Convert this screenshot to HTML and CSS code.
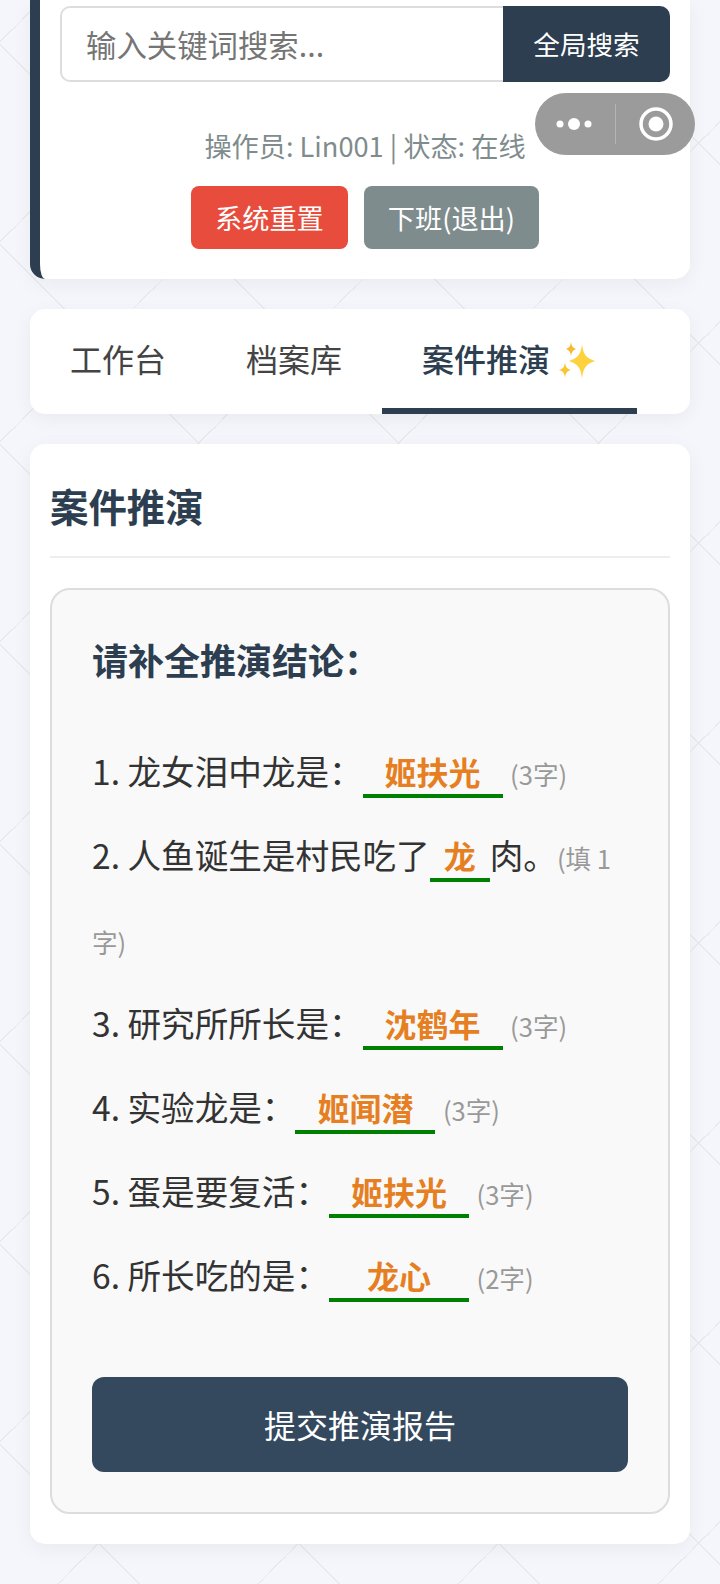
FILE: index.html
```html
<!DOCTYPE html>
<html lang="zh-CN">
<head>
  <meta charset="UTF-8" />
  <meta name="viewport" content="width=device-width, initial-scale=1.0" />
  <title>案件推演</title>
  <link rel="stylesheet" href="styles.css">
</head>
<body>
  <div class="page">
    <div class="card header-card">
      <div class="search-row">
        <div class="search-input">输入关键词搜索...</div>
        <div class="search-btn">全局搜索</div>
      </div>
      <div class="status">操作员: Lin001 | 状态: 在线</div>
      <div class="actions">
        <div class="btn btn-red">系统重置</div>
        <div class="btn btn-gray">下班(退出)</div>
      </div>
    </div>

    <div class="card tabs">
      <div class="tab">工作台</div>
      <div class="tab">档案库</div>
      <div class="tab tab-active">案件推演
        <svg class="sparkle" width="40" height="44" viewBox="0 0 40 44">
          <path d="M25 4C26 14 29 18 38 21C29 24 26 28 25 39C24 28 21 24 12 21C21 18 24 14 25 4Z" fill="#fdd23c" />
          <path d="M14 2C14.500 6 16 8 19 9C16 10 14.500 12 14 16C13.500 12 12 10 9 9C12 8 13.500 6 14 2Z" fill="#f5b932" />
          <path d="M8 22C8.500 27 10 29 14 30C10 31 8.500 33 8 38C7.500 33 6 31 2 30C6 29 7.500 27 8 22Z" fill="#fbc531" />
        </svg>
      </div>
    </div>

    <div class="card main-card">
      <h2 class="title">案件推演</h2>
      <div class="quiz">
        <h3 class="quiz-title">请补全推演结论：</h3>
        <div class="quiz-row">1. 龙女泪中龙是：<span class="blank">姬扶光</span> <span class="hint">(3字)</span></div>
        <div class="quiz-row">2. 人鱼诞生是村民吃了<span class="blank blank-short">龙</span>肉。<span class="hint">(填 1 字)</span></div>
        <div class="quiz-row">3. 研究所所长是：<span class="blank">沈鹤年</span> <span class="hint">(3字)</span></div>
        <div class="quiz-row">4. 实验龙是：<span class="blank">姬闻潜</span> <span class="hint">(3字)</span></div>
        <div class="quiz-row">5. 蛋是要复活：<span class="blank">姬扶光</span> <span class="hint">(3字)</span></div>
        <div class="quiz-row">6. 所长吃的是：<span class="blank">龙心</span> <span class="hint">(2字)</span></div>
        <div class="submit">提交推演报告</div>
      </div>
    </div>
  </div>

  <div class="capsule">
    <svg width="54" height="16" viewBox="0 0 54 16">
      <circle cx="13" cy="8" r="3.500" fill="#fff" />
      <circle cx="27" cy="8" r="6" fill="#fff" />
      <circle cx="41" cy="8" r="3.500" fill="#fff" />
    </svg>
    <span class="capsule-line"></span>
    <svg width="36" height="36" viewBox="0 0 36 36">
      <circle cx="18" cy="18" r="15" fill="none" stroke="#fff" stroke-width="3.500" />
      <circle cx="18" cy="18" r="7.500" fill="#fff" />
    </svg>
  </div>
</body>
</html>
```

FILE: styles.css
```css
* { box-sizing: border-box; margin: 0; padding: 0; }
html, body { width: 720px; height: 1584px; overflow: hidden; }
body {
  position: relative;
  font-family: "Noto Sans CJK SC", "Noto Sans", sans-serif;
  color: #333;
  background-color: #f4f6fb;
  background-image:
    linear-gradient(45deg, transparent 49.75%, #e8eaee 49.75%, #e8eaee 50.25%, transparent 50.25%),
    linear-gradient(-45deg, transparent 49.75%, #e8eaee 49.75%, #e8eaee 50.25%, transparent 50.25%);
  background-size: 200px 200px;
  background-position: -1px 43px;
}
.page { display: flex; flex-direction: column; gap: 30px; padding: 0 30px; }
.card { background: #fff; border-radius: 15px; box-shadow: 0 5px 20px rgba(0, 0, 0, 0.05); }

.header-card { border-left: 10px solid #2c3e50; border-radius: 0 0 15px 15px; padding: 6px 20px 30px; }
.search-row { display: flex; height: 76px; }
.search-input {
  flex: 1;
  border: 2px solid #ddd;
  border-right: 0;
  border-radius: 10px 0 0 10px;
  padding-left: 24px;
  font-size: 30.4px;
  line-height: 72px;
  color: #757575;
}
.search-btn {
  width: 167px;
  background: #2c3e50;
  color: #fff;
  border-radius: 0 10px 10px 0;
  font-size: 26.6px;
  line-height: 76px;
  text-align: center;
}
.status { margin-top: 43px; font-size: 27.2px; line-height: 40px; color: #7f8c8d; text-align: center; }
.actions { display: flex; justify-content: center; gap: 16px; margin-top: 21px; }
.btn { padding: 0 24px; font-size: 27.2px; line-height: 63px; color: #fff; border-radius: 8px; }
.btn-red { background: #e74c3c; }
.btn-gray { background: #7f8c8d; }

.tabs { display: flex; height: 105px; overflow: hidden; }
.tab { padding: 0 40px; font-size: 32px; line-height: 98px; color: #444; white-space: nowrap; }
.tab-active { color: #2c3e50; font-weight: 500; border-bottom: 6px solid #2c3e50; height: 105px; }
.sparkle { vertical-align: -12px; }

.main-card { padding: 20px 20px 30px; }
.title {
  height: 94px;
  padding-top: 12px;
  border-bottom: 2px solid #eee;
  font-size: 38.4px;
  line-height: 58px;
  font-weight: 700;
  color: #2c3e50;
}
.quiz { margin-top: 30px; padding: 40px; background: #f9f9f9; border: 2px solid #ddd; border-radius: 20px; }
.quiz-title { font-size: 36px; line-height: 58px; font-weight: 700; color: #2c3e50; margin-bottom: 41px; }
.quiz-row { font-size: 33.6px; line-height: 84px; }
.blank {
  display: inline-block;
  width: 140px;
  border-bottom: 4px solid #008000;
  font-size: 32px;
  font-weight: 700;
  line-height: 46px;
  color: #e67e22;
  text-align: center;
}
.blank-short { width: 60px; }
.hint { font-size: 25.6px; line-height: 1; color: #999; }
.submit {
  margin-top: 60px;
  height: 95px;
  background: #34495e;
  color: #fff;
  border-radius: 12px;
  font-size: 32px;
  line-height: 95px;
  text-align: center;
}

.capsule {
  position: absolute;
  left: 535px;
  top: 93px;
  width: 160px;
  height: 62px;
  display: flex;
  align-items: center;
  padding-left: 12px;
  background: #9b9b9b;
  border-radius: 31px;
}
.capsule-line { width: 1px; height: 40px; margin: 0 22px 0 14px; background: #b5b5b5; }
```
